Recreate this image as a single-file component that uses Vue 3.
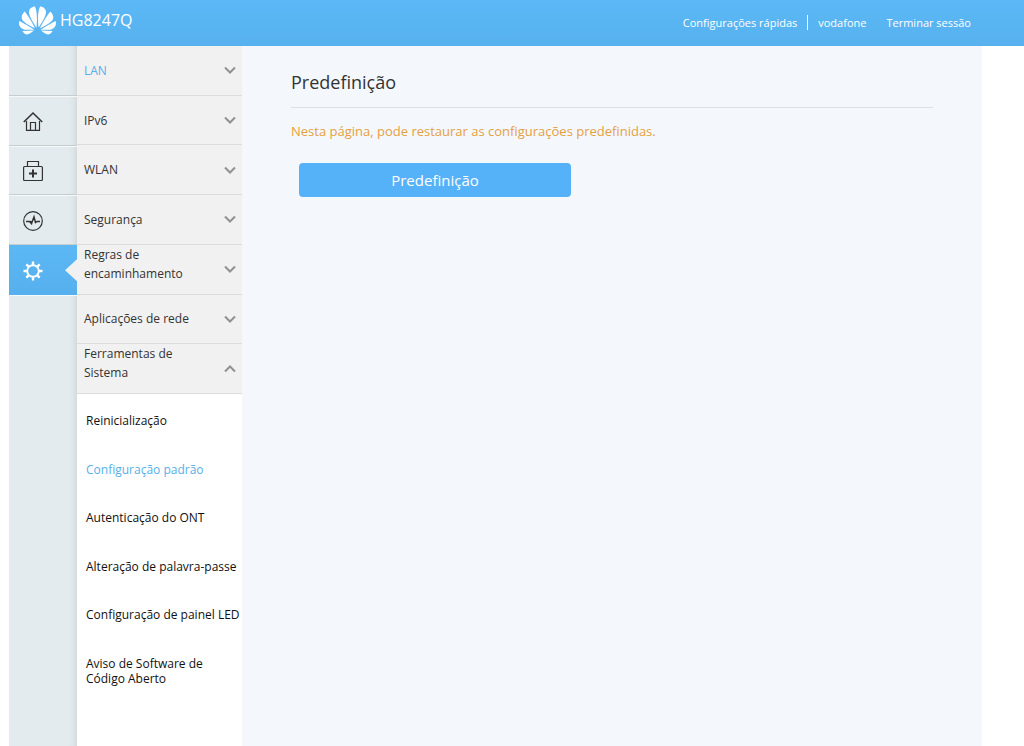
<script setup>
const sections = [
  { label: 'LAN', current: true },
  { label: 'IPv6' },
  { label: 'WLAN' },
  { label: 'Segurança' },
  { label: 'Regras de encaminhamento', wraps: true },
  { label: 'Aplicações de rede' },
  { label: 'Ferramentas de Sistema', wraps: true, open: true }
]
const tools = [
  { label: 'Reinicialização' },
  { label: 'Configuração padrão', current: true },
  { label: 'Autenticação do ONT' },
  { label: 'Alteração de palavra-passe' },
  { label: 'Configuração de painel LED' },
  { label: 'Aviso de Software de Código Aberto' }
]
</script>

<template>
  <div class="page">
    <header class="top">
      <div class="brand">
        <svg class="logo" viewBox="0 3 24 18" aria-hidden="true">
          <path fill="currentColor" d="M3.67 6.14S1.82 7.91 1.72 9.78v.35c.08 1.51 1.22 2.4 1.22 2.4 1.83 1.79 6.26 4.04 7.3 4.55 0 0 .06.03.1-.01l.02-.04v-.04C7.52 10.8 3.67 6.14 3.67 6.14zM9.65 18.6c-.02-.08-.1-.08-.1-.08l-7.38.26c.8 1.43 2.15 2.53 3.56 2.2.96-.25 3.16-1.78 3.88-2.3.06-.05.04-.09.04-.09zm.08-.78C6.49 15.63.21 12.28.21 12.28c-.15.46-.2.9-.21 1.3v.07c0 1.07.4 1.82.4 1.82.8 1.69 2.34 2.2 2.34 2.2.7.3 1.4.31 1.4.31.12.02 4.4 0 5.54 0 .05 0 .08-.05.08-.05v-.06c0-.03-.03-.05-.03-.05zM9.06 3.19a3.42 3.42 0 00-2.57 3.15v.41c.03.6.16 1.05.16 1.05.66 2.9 3.86 7.65 4.55 8.65.05.05.1.03.1.03a.1.1 0 00.06-.1c1.06-10.6-1.11-13.42-1.11-13.42-.32.02-1.19.23-1.19.23zm8.299 2.27s-.49-1.8-2.44-2.28c0 0-.57-.14-1.17-.22 0 0-2.18 2.81-1.12 13.43.01.07.06.08.06.08.07.03.1-.03.1-.03.72-1.03 3.9-5.76 4.55-8.64 0 0 .36-1.4.02-2.34zm-2.92 13.07s-.07 0-.09.05c0 0-.01.07.03.1.7.51 2.85 2 3.88 2.3 0 0 .16.05.43.06h.14c.69-.02 1.9-.37 3-2.26l-7.4-.25zm7.83-8.41c.14-2.06-1.94-3.97-1.94-3.98 0 0-3.85 4.66-6.67 10.8 0 0-.03.08.02.13l.04.01h.06c1.06-.53 5.46-2.77 7.28-4.54 0 0 1.15-.93 1.21-2.42zm1.52 2.14s-6.28 3.37-9.52 5.55c0 0-.05.04-.03.11 0 0 .03.06.07.06 1.16 0 5.56 0 5.67-.02 0 0 .57-.02 1.27-.29 0 0 1.56-.5 2.37-2.27 0 0 .73-1.45.17-3.14z" />
        </svg>
        <span class="model">HG8247Q</span>
      </div>
      <nav class="session">
        <a href="#" class="quick">Configurações rápidas</a>
        <span class="user">vodafone</span>
        <a href="#">Terminar sessão</a>
      </nav>
    </header>

    <div class="body">
      <nav class="rail" aria-label="Principal">
        <ul class="rail-list">
          <li class="rail-item"></li>
          <li class="rail-item">
            <a href="#" aria-label="Início">
              <svg viewBox="0 0 20 20" aria-hidden="true">
                <path d="M.8 11 10 2l9.200 9" stroke-width="1.600" />
                <path d="M3.500 10v9.400h13V10M7.500 19.400V11.500h5v7.900" />
              </svg>
            </a>
          </li>
          <li class="rail-item">
            <a href="#" aria-label="Assistência">
              <svg viewBox="0 0 20 20" aria-hidden="true">
                <rect x="0.600" y="5.500" width="18.800" height="14" rx="1" />
                <path d="M4.500 5.500v-5h11v5" />
                <path d="M10 8.500v8M6 12.500h8" stroke-width="2" />
              </svg>
            </a>
          </li>
          <li class="rail-item">
            <a href="#" aria-label="Estado">
              <svg viewBox="0 0 20 20" aria-hidden="true">
                <circle cx="10" cy="10" r="9.300" />
                <path d="M3 10.500h4l1.500 2L11 6l1.500 5.500 1.500-1h3" stroke-width="1.500" />
                <path d="M6.500 10.500h2v2z" fill="currentColor" />
              </svg>
            </a>
          </li>
          <li class="rail-item active">
            <a href="#" aria-label="Configurações" aria-current="page">
              <svg viewBox="0 0 20 20" aria-hidden="true">
                <circle cx="10" cy="10" r="5.800" stroke-width="1.900" />
                <path d="M10 .5V4M10 16v3.500M.5 10H4M16 10h3.500M3.300 3.300 5.700 5.700M14.300 14.300l2.400 2.400M16.700 3.300l-2.400 2.400M5.700 14.300l-2.400 2.400" stroke-width="2.400" />
              </svg>
            </a>
          </li>
        </ul>
      </nav>

      <nav class="menu" aria-label="Configurações">
        <div class="sections">
          <button
            v-for="s in sections"
            :key="s.label"
            type="button"
            class="section"
            :class="{ current: s.current, wraps: s.wraps, open: s.open }"
            :aria-expanded="!!s.open"
          >
            <span class="section-label">{{ s.label }}</span>
            <svg class="chevron" viewBox="0 0 12 8" aria-hidden="true">
              <path d="M1 1.500 6 6.500 11 1.500" />
            </svg>
          </button>
        </div>
        <ul class="tools">
          <li v-for="t in tools" :key="t.label">
            <a href="#" :class="{ current: t.current }">{{ t.label }}</a>
          </li>
        </ul>
      </nav>

      <main class="content">
        <h1>Predefinição</h1>
        <p class="note">Nesta página, pode restaurar as configurações predefinidas.</p>
        <button type="button" class="restore">Predefinição</button>
      </main>
    </div>
  </div>
</template>

<style>
body {
  margin: 0;
  background: #fff;
}
</style>

<style scoped>
.page {
  display: flex;
  flex-direction: column;
  min-height: 100vh;
  font-family: "Trebuchet MS", "Open Sans", "Noto Sans", sans-serif;
  font-size: 12px;
  color: #333;
}
ul {
  margin: 0;
  padding: 0;
  list-style: none;
}
a {
  color: inherit;
  text-decoration: none;
}
button {
  border: 0;
  font: inherit;
  color: inherit;
  cursor: pointer;
}

.top {
  display: flex;
  justify-content: space-between;
  height: 46px;
  padding: 0 53px 0 19px;
  background: linear-gradient(#5cb8f6, #56b1ee);
  color: #fff;
}
.brand {
  display: flex;
  align-items: center;
  gap: 4px;
  height: 40px;
}
.logo {
  width: 37px;
  height: 29px;
}
.model {
  font-size: 16px;
  font-weight: 500;
}
.session {
  display: flex;
  align-items: center;
  height: 44px;
  font-size: 11px;
  font-weight: 500;
}
.quick {
  padding-right: 10px;
  border-right: 1px solid #fff;
}
.user {
  padding: 0 20px 0 10px;
}

.body {
  flex: 1;
  display: flex;
  padding: 0 42px 0 9px;
}

.rail {
  flex: none;
  width: 68px;
  background: linear-gradient(90deg, #e4ebee 58px, #dfe6e9 64px, #d3dadd);
}
.rail-list {
  display: grid;
  grid-auto-rows: 1fr;
  height: 249px;
}
.rail-item {
  position: relative;
  border-bottom: 1px solid #c6cdd0;
  box-shadow: 0 1px #f6f9fa;
}
.rail-item a {
  display: flex;
  align-items: center;
  box-sizing: border-box;
  height: 100%;
  padding: 2px 0 0 14px;
}
.rail-item svg {
  width: 20px;
  height: 20px;
  fill: none;
  stroke: currentColor;
  stroke-width: 1.200;
}
.rail-item.active {
  background: linear-gradient(#5cb8f5, #55b0ed);
  border-bottom-color: #55b0ed;
  color: #fff;
}
.rail-item.active::after {
  content: "";
  position: absolute;
  top: 14px;
  right: 0;
  width: 12px;
  height: 22px;
  background: #f1f1f1;
  clip-path: polygon(100% 0, 100% 100%, 0 50%);
}

.menu {
  flex: none;
  width: 165px;
  background: #fff;
}
.sections {
  display: grid;
  grid-auto-rows: 1fr;
  height: 348px;
}
.section {
  display: flex;
  align-items: center;
  justify-content: space-between;
  padding: 0 6px 0 7px;
  border-bottom: 1px solid #dcdcdc;
  background: #f1f1f1;
  line-height: 19px;
  text-align: left;
}
.section-label {
  max-width: 110px;
}
.wraps .section-label {
  align-self: flex-start;
}
.chevron {
  width: 12px;
  height: 8px;
  fill: none;
  stroke: #909090;
  stroke-width: 2;
}
.open .chevron {
  transform: rotate(180deg);
}
.current {
  color: #56b0ea;
}
.tools {
  display: grid;
  grid-auto-rows: 1fr;
  height: 292px;
  padding-left: 9px;
  color: #111;
}
.tools a {
  display: block;
  padding-top: 19px;
  line-height: 15px;
}
.tools .current {
  color: #56b0ea;
}

.content {
  flex: 1;
  min-width: 0;
  padding: 20px 49px;
  background: #f4f8fd;
}
h1 {
  margin: 0;
  padding-bottom: 9px;
  border-bottom: 1px solid #dbe0e5;
  font-size: 18px;
  font-weight: 500;
  line-height: 32px;
}
.note {
  margin: 14px 0 23px;
  color: #e5a040;
  font-size: 13px;
  font-weight: 500;
  line-height: 18px;
}
.restore {
  width: 272px;
  height: 34px;
  margin-left: 8px;
  border-radius: 4px;
  background: #56b2f8;
  color: #fff;
  font-size: 15px;
  font-weight: 500;
}
</style>
